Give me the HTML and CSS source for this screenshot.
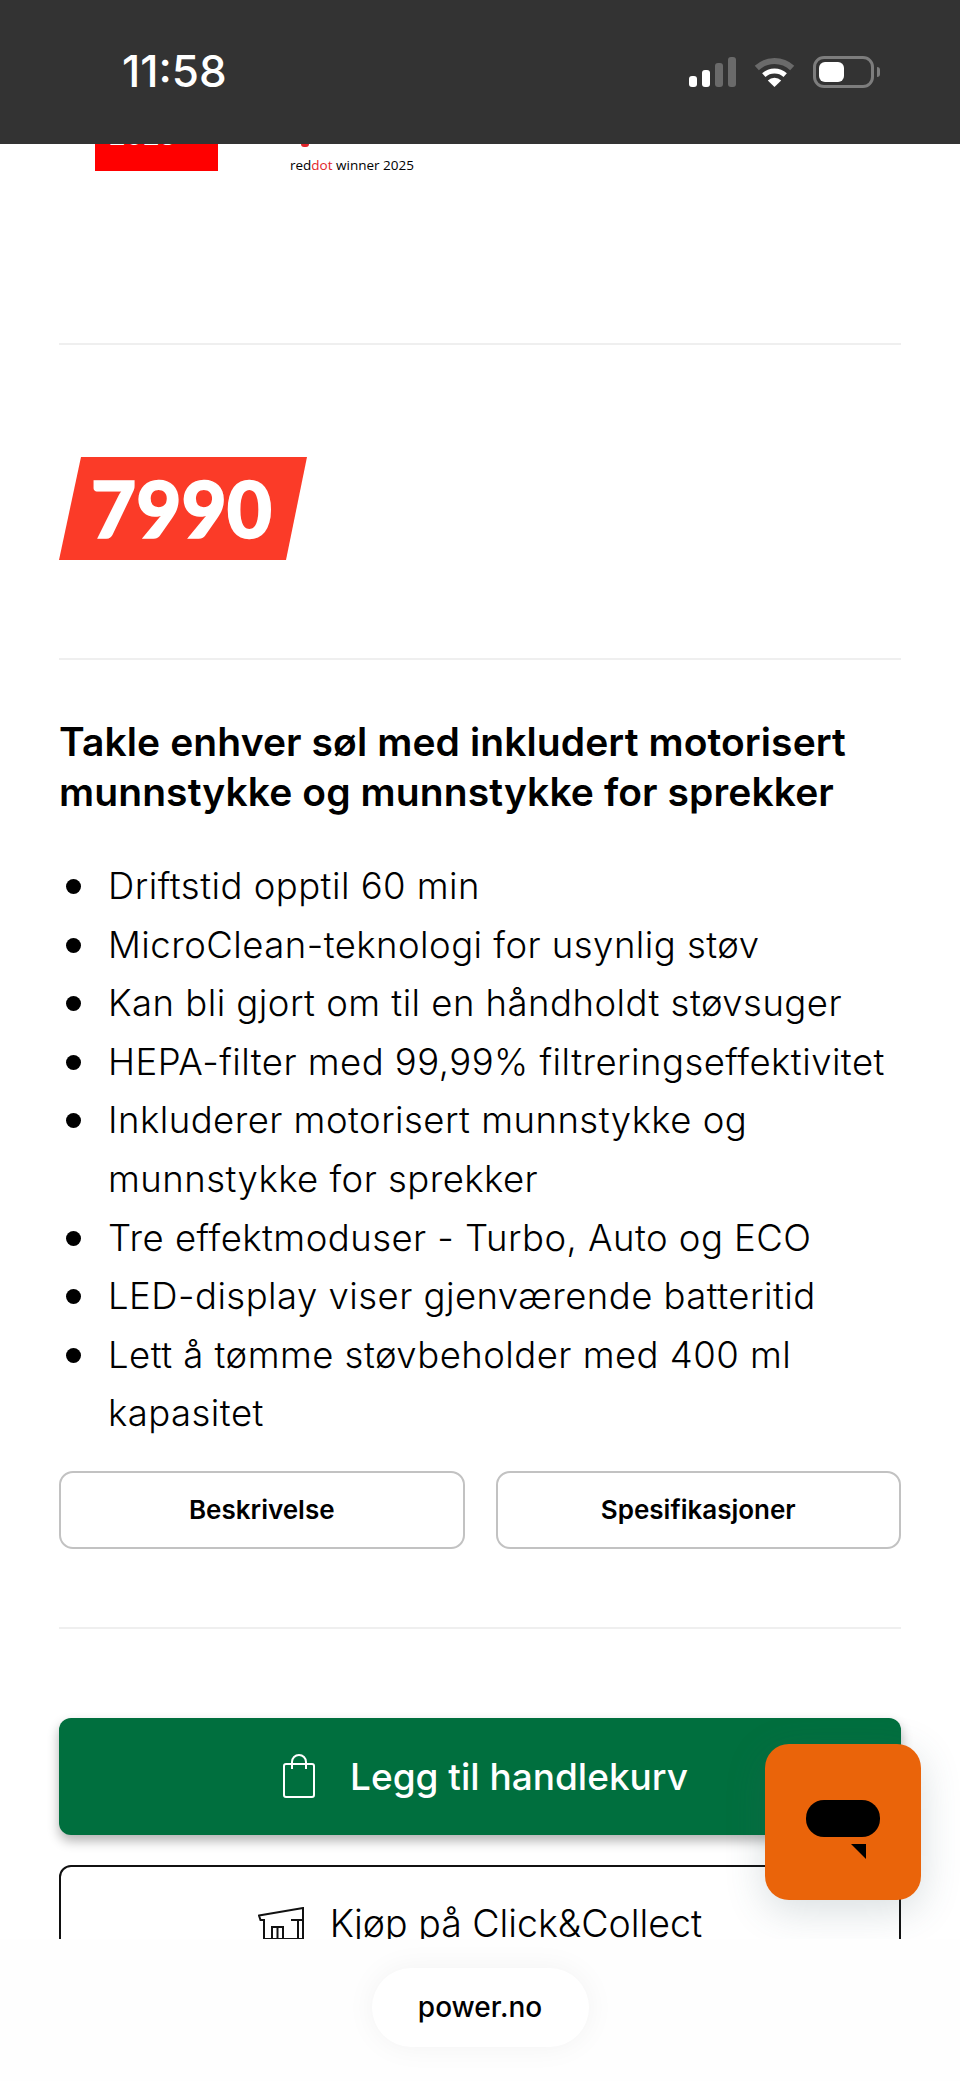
FILE: index.html
```html
<!DOCTYPE html>
<html>
<head>
	<title>power.no</title>
	<link rel="stylesheet" href="styles.css">
</head>
<body>
	<div class="page">
		<div class="status">
			<span class="time">11:58</span>
			<div class="status-icons">
				<svg class="signal" width="47" height="30" viewBox="0 0 47 30">
					<rect x="0" y="19" width="8" height="11" rx="3" fill="#fff"/>
					<rect x="13" y="13" width="8" height="17" rx="3" fill="#fff"/>
					<rect x="26" y="6" width="8" height="24" rx="3" fill="#6a6a6a"/>
					<rect x="39" y="0" width="8" height="30" rx="3" fill="#6a6a6a"/>
				</svg>
				<svg class="wifi" width="41" height="30" viewBox="0 0 41 30">
					<path d="M2.8 11A26 26 0 0 1 38.2 11" fill="none" stroke="#6a6a6a" stroke-width="6"/>
					<path d="M9.8 18.1A16 16 0 0 1 31.2 18.1" fill="none" stroke="#fff" stroke-width="5"/>
					<path d="M20.5 30L13.8 23.5A9.5 9.5 0 0 1 27.2 23.5Z" fill="#fff"/>
				</svg>
				<div class="battery"><div class="battery-level"></div></div>
				<div class="battery-nub"></div>
			</div>
		</div>

		<div class="content">
			<div class="awards">
				<div class="award-badge"><span>2025</span></div>
				<div class="award-side">
					<div class="award-mark"></div>
					<p class="award-text">red<span class="red">dot</span> winner 2025</p>
				</div>
			</div>
			<div class="divider first"></div>

			<div class="price"><span>7990</span></div>
			<div class="divider second"></div>

			<h2 class="title">Takle enhver søl med inkludert motorisert munnstykke og munnstykke for sprekker</h2>
			<ul class="features">
				<li>Driftstid opptil 60 min</li>
				<li>MicroClean-teknologi for usynlig støv</li>
				<li>Kan bli gjort om til en håndholdt støvsuger</li>
				<li>HEPA-filter med 99,99% filtreringseffektivitet</li>
				<li>Inkluderer motorisert munnstykke og munnstykke for sprekker</li>
				<li>Tre effektmoduser - Turbo, Auto og ECO</li>
				<li>LED-display viser gjenværende batteritid</li>
				<li>Lett å tømme støvbeholder med 400 ml kapasitet</li>
			</ul>

			<div class="tabs">
				<a class="tab">Beskrivelse</a>
				<a class="tab">Spesifikasjoner</a>
			</div>
			<div class="divider third"></div>

			<a class="btn-cart">
				<svg width="32" height="44" viewBox="0 0 32 44" fill="none" stroke="#fff" stroke-width="2">
					<rect x="1" y="10" width="30" height="33" rx="2"/>
					<path d="M9 15V8a7 7 0 0 1 14 0v7"/>
				</svg>
				<span>Legg til handlekurv</span>
			</a>
			<a class="btn-collect">
				<svg width="46" height="33" viewBox="0 0 46 33" fill="none" stroke="#111" stroke-width="2">
					<path d="M1 8.5L45 1V32H6V13H2.5Z"/>
					<path d="M33 13H45M40 13V32M14 32V20H25V32M19.5 20V32"/>
				</svg>
				<span>Kjøp på Click&amp;Collect</span>
			</a>
		</div>

		<div class="bottom">
			<div class="url">power.no</div>
		</div>

		<div class="chat">
			<div class="bubble"></div>
			<div class="bubble-tail"></div>
		</div>
	</div>
</body>
</html>
```

FILE: styles.css
```css
html, body {
	margin: 0;
	background: #fff;
}

.page {
	position: relative;
	display: flex;
	flex-direction: column;
	width: 960px;
	height: 2081px;
	overflow: hidden;
	font-family: "Inter", "Liberation Sans", sans-serif;
	color: #000;
}

/* phone status bar */
.status {
	position: relative;
	z-index: 2;
	display: flex;
	flex: none;
	justify-content: space-between;
	align-items: flex-start;
	height: 144px;
	padding: 0 80px 0 122px;
	box-sizing: border-box;
	background: #333;
}

.time {
	margin-top: 47px;
	font-size: 44px;
	font-weight: 500;
	line-height: 48px;
	color: #fff;
}

.status-icons {
	display: flex;
	align-items: center;
	margin-top: 56px;
}

.wifi {
	margin-left: 18px;
}

.battery {
	width: 61px;
	height: 32px;
	margin-left: 18px;
	padding: 3px;
	box-sizing: border-box;
	border: 3px solid #7d7d7d;
	border-radius: 11px;
}

.battery-level {
	width: 25px;
	height: 100%;
	border-radius: 6px;
	background: #fff;
}

.battery-nub {
	width: 3px;
	height: 10px;
	margin-left: 3px;
	border-radius: 0 3px 3px 0;
	background: #7d7d7d;
}

/* page content */
.content {
	flex: none;
	height: 1795px;
	padding: 0 59px;
	box-sizing: border-box;
	overflow: hidden;
}

.awards {
	display: flex;
	height: 27px;
}

.award-badge {
	width: 109px;
	height: 27px;
	margin-left: 36px;
	padding-left: 14px;
	overflow: hidden;
	background: #f00;
}

.award-badge span {
	display: block;
	margin-top: -18px;
	font-size: 26px;
	font-weight: 700;
	line-height: 20px;
	color: #fff;
}

.award-side {
	margin-left: 72px;
}

.award-mark {
	width: 8px;
	height: 3px;
	margin-left: 11px;
	border-radius: 0 0 4px 4px;
	background: #e1242a;
}

.award-text {
	margin: 9px 0 0;
	font-family: "Open Sans", sans-serif;
	font-size: 13.5px;
	line-height: 18px;
	white-space: nowrap;
}

.red {
	color: #e1242a;
}

.divider {
	height: 2px;
	background: #efefef;
}

.first {
	margin-top: 172px;
}

.price {
	display: flex;
	align-items: center;
	justify-content: center;
	width: 248px;
	height: 103px;
	margin-top: 112px;
	padding-right: 3px;
	box-sizing: border-box;
	clip-path: polygon(22px 0, 100% 0, 227px 100%, 0 100%);
	background: #fb3b28;
}

.price span {
	font-family: "Lato", sans-serif;
	font-size: 78px;
	font-weight: 900;
	line-height: 103px;
	color: #fff;
	-webkit-text-stroke: 1.5px #fff;
}

.second {
	margin-top: 98px;
}

.title {
	margin: 57px 0 0;
	font-size: 39px;
	font-weight: 600;
	line-height: 50px;
	letter-spacing: 0.1px;
}

.features {
	margin: 40px 0 0;
	padding: 0 0 0 49px;
	list-style: none;
	font-size: 36.5px;
	font-weight: 300;
	line-height: 58.6px;
	letter-spacing: 0.46px;
}

.features li {
	position: relative;
}

.features li::before {
	content: "";
	position: absolute;
	left: -42px;
	top: 22px;
	width: 15px;
	height: 15px;
	border-radius: 50%;
	background: #000;
}

.tabs {
	display: grid;
	grid-template-columns: 1fr 1fr;
	gap: 31px;
	margin-top: 28px;
}

.tab {
	display: flex;
	align-items: center;
	justify-content: center;
	height: 78px;
	box-sizing: border-box;
	border: 2px solid #c2c2c2;
	border-radius: 14px;
	font-size: 26px;
	font-weight: 600;
}

.third {
	margin-top: 78px;
}

.btn-cart,
.btn-collect {
	display: flex;
	align-items: center;
	justify-content: center;
	box-sizing: border-box;
	border-radius: 12px;
}

.btn-cart {
	gap: 35px;
	height: 117px;
	margin-top: 89px;
	padding-left: 11px;
	background: #006f3e;
	box-shadow: 0 6px 12px rgba(0, 0, 0, 0.3);
	font-size: 37px;
	font-weight: 500;
	color: #fff;
}

.btn-collect {
	gap: 26px;
	height: 117px;
	margin-top: 30px;
	border: 2px solid #111;
	font-size: 37.5px;
	font-weight: 300;
}

/* browser url bar */
.bottom {
	position: relative;
	z-index: 2;
	display: flex;
	flex: 1;
	justify-content: center;
	padding-top: 29px;
	background: #fefefe;
}

.url {
	width: 217px;
	height: 79px;
	border-radius: 40px;
	background: #fff;
	box-shadow: 0 0 30px rgba(0, 0, 0, 0.05);
	font-size: 28px;
	font-weight: 500;
	line-height: 79px;
	text-align: center;
}

/* floating chat button */
.chat {
	position: absolute;
	left: 765px;
	top: 1744px;
	width: 156px;
	height: 156px;
	border-radius: 24px;
	background: #ea640a;
	box-shadow: 0 10px 40px rgba(60, 90, 100, 0.2);
}

.bubble {
	position: absolute;
	left: 41px;
	top: 56px;
	width: 74px;
	height: 37px;
	border-radius: 18px / 18px;
	background: #000;
}

.bubble-tail {
	position: absolute;
	left: 86px;
	top: 100px;
	width: 15px;
	height: 15px;
	clip-path: polygon(0 0, 100% 0, 100% 100%);
	background: #000;
}
```
